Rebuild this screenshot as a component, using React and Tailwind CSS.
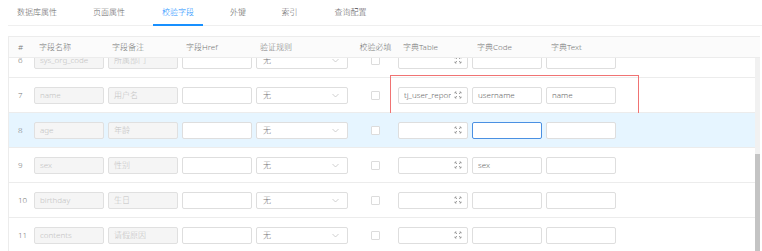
import React from 'react';

const tabs = [
  { label: '数据库属性', cls: 'w-[58px]' },
  { label: '页面属性', cls: 'w-[86px]' },
  { label: '校验字段', cls: 'w-[50px] ml-[1px]', active: true },
  { label: '外键', cls: 'w-[70px]' },
  { label: '索引', cls: 'w-[33px]' },
  { label: '查询配置', cls: 'w-[89px]' },
];

const rows = [
  { no: 6, name: 'sys_org_code', remark: '所属部门', table: '', code: '', text: '' },
  { no: 7, name: 'name', remark: '用户名', table: 'tj_user_repor', code: 'username', text: 'name', boxed: true },
  { no: 8, name: 'age', remark: '年龄', table: '', code: '', text: '', active: true },
  { no: 9, name: 'sex', remark: '性别', table: '', code: 'sex', text: '' },
  { no: 10, name: 'birthday', remark: '生日', table: '', code: '', text: '' },
  { no: 11, name: 'contents', remark: '请假原因', table: '', code: '', text: '' },
];

const cols = 'grid grid-cols-[25px_74px_74px_74px_97px_45px_74px_74px_74px_1fr] items-center';

const ExpandIcon = () => (
  <svg width="8" height="8" viewBox="0 0 8 8" fill="none" stroke="#999" strokeWidth="0.9">
    <path d="M1 1l2 2M1 1h1.5M1 1v1.5" />
    <path d="M7 1L5 3M7 1H5.5M7 1v1.5" />
    <path d="M1 7l2-2M1 7h1.5M1 7V5.5" />
    <path d="M7 7L5 5M7 7H5.5M7 7V5.5" />
  </svg>
);

const Chevron = () => (
  <svg width="7" height="5" viewBox="0 0 7 5" fill="none" stroke="#c4c4c4" strokeWidth="0.8">
    <path d="M0.5 1l3 3 3-3" />
  </svg>
);

const Box = ({ value, disabled, focus }) => (
  <div
    className={`h-[17px] w-[70px] rounded-[2px] border px-[5px] flex items-center text-[8px] truncate ${
      disabled ? 'bg-[#f5f5f5] text-[#c2c2c2]' : 'bg-white text-[#666]'
    } ${focus ? 'border-[#4a90e2]' : disabled ? 'border-[#e0e0e0]' : 'border-[#dedede]'}`}
  >
    {value}
  </div>
);

export default function App() {
  return (
    <div className="w-[762px] h-[251px] overflow-hidden bg-white text-[8px] font-light font-['Noto_Sans','Noto_Sans_CJK_SC',sans-serif]">
      <div className="ml-[8px] h-[26px] border-b border-[#efefef] flex items-end">
        {tabs.map((t) => (
          <div
            key={t.label}
            className={`h-[26px] flex items-center justify-center ${t.cls} ${
              t.active ? 'border-b-2 border-[#1890ff] text-[#1890ff] -mb-px' : 'text-[#666]'
            }`}
          >
            {t.label}
          </div>
        ))}
      </div>

      <div className="mt-[10px] ml-[8px] border-l border-t border-[#ececec] w-[752px]">
        <div className={`${cols} h-[21px] bg-[#fbfbfb] border-b border-[#ececec] text-[#777] relative z-10`}>
          <div className="pl-[9px]">#</div>
          <div className="pl-[5px]">字段名称</div>
          <div className="pl-[4px]">字段备注</div>
          <div className="pl-[4px]">字段Href</div>
          <div className="pl-[4px]">验证规则</div>
          <div className="text-center">校验必填</div>
          <div className="pl-[5px]">字典Table</div>
          <div className="pl-[5px]">字典Code</div>
          <div className="pl-[5px]">字典Text</div>
          <div />
        </div>

        <div className="flex h-[194px] overflow-hidden">
          <div className="flex-1 overflow-hidden">
            <div className="-mt-[15px]">
              {rows.map((r) => (
                <div
                  key={r.no}
                  className={`${cols} h-[35px] border-b border-[#ececec] relative ${r.active ? 'bg-[#e6f5ff]' : 'bg-white'}`}
                >
                  <div className="pl-[9px] text-[#777]">{r.no}</div>
                  <Box value={r.name} disabled />
                  <Box value={r.remark} disabled />
                  <Box value="" />
                  <div className="h-[17px] w-[92px] rounded-[2px] border border-[#dedede] bg-white pl-[6px] pr-[8px] flex items-center justify-between text-[#777]">
                    <span>无</span>
                    <Chevron />
                  </div>
                  <div className="flex justify-center">
                    <div className="w-[9px] h-[9px] border border-[#dcdcdc] rounded-[1px] bg-white" />
                  </div>
                  <div className="h-[17px] w-[70px] rounded-[2px] border border-[#dedede] bg-white pl-[5px] pr-[5px] flex items-center justify-between text-[#666]">
                    <span className="truncate">{r.table}</span>
                    <ExpandIcon />
                  </div>
                  <Box value={r.code} focus={r.active} />
                  <Box value={r.text} />
                  <div />
                  {r.boxed ? (
                    <div className="absolute left-[381px] top-[-3px] w-[249px] h-[40px] border border-[#f07373] pointer-events-none" />
                  ) : null}
                </div>
              ))}
            </div>
          </div>
          <div className="w-[5px] bg-[#f1f1f1] flex flex-col">
            <div className="h-[96px]" />
            <div className="flex-1 bg-[#c4c4c4]" />
          </div>
        </div>
      </div>
    </div>
  );
}
